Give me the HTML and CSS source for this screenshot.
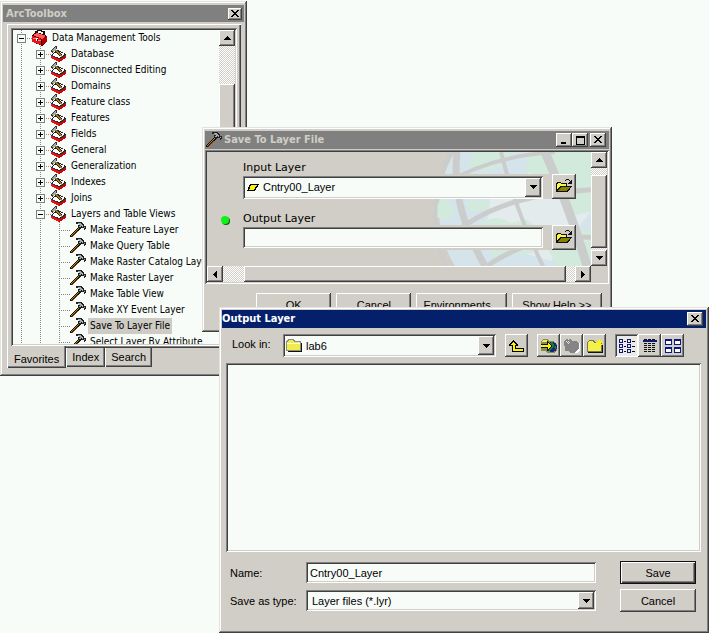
FILE: index.html
```html
<!DOCTYPE html>
<html lang="en">
<head>
<meta charset="utf-8">
<title>ArcToolbox</title>
<link rel="stylesheet" href="styles.css">
</head>
<body>
<svg class="sprite" aria-hidden="true">
  <symbol id="case" viewBox="0 0 16 16">
    <path d="M4 4V2l3-2 5 2v3" fill="none" stroke="#111" stroke-width="1.4"/>
    <path d="M0 5l5-3 10 4v6l-5 4-9-4z" fill="#400"/>
    <path d="M1 5l4-2 9 3-4 3z" fill="#ff5a58"/>
    <path d="M0 6l9 3v6l-9-3z" fill="#f01014"/>
    <path d="M10 9l5-3v6l-5 3z" fill="#b80008"/>
    <path d="M1 8l8 3" stroke="#ff9a94" fill="none"/>
    <path d="M4 8h2v3H4z" fill="#fff"/><path d="M5 9h1v2H5z" fill="#111"/>
  </symbol>
  <symbol id="tray" viewBox="0 0 16 16">
    <path d="M0 9l7-5 8 4v4l-7 4-8-4z" fill="#222"/>
    <path d="M1 9l6-4 7 3-6 4z" fill="#fff"/>
    <path d="M0 9l8 4v3l-8-4z" fill="#f01014"/>
    <path d="M8 13l7-4v3l-7 4z" fill="#d80008"/>
    <path d="M0 9l8 4 7-4" stroke="#333" fill="none"/>
    <path d="M4 4l7 6" stroke="#222" stroke-width="2.600"/>
    <path d="M4 4l7 6" stroke="#98861c" stroke-width="1.600"/>
    <path d="M0 6V4l4-4h2v3l-3 2-1 2H1z" fill="#333"/>
    <path d="M1 5l3-4h1v2L2 6z" fill="#a8a8a8"/>
  </symbol>
  <symbol id="hammer" viewBox="0 0 16 16">
    <path d="M0 13h1v-1h1v-1h1v-1h1V9h1V8h1V7h1V6h1V5h1V4h3v2h-1v1h-1v1H9v1H8v1H7v1H6v1H5v1H4v1H3v1H0z" fill="#1c1408"/>
    <path d="M1 13h1v-1h1v-1h1v-1h1V9h1V8h1V7h1V6h1V5h1v1H9v1H8v1H7v1H6v1H5v1H4v1H3v1H2v1H1z" fill="#94901c"/>
    <path d="M2 14h1v-1h1v-1h1v-1h1v-1h1V9h1v1H7v1H6v1H5v1H4v1H3v1H2z" fill="#b42c10"/>
    <path d="M6 0h6v1h1v1h1v2h2v3h-1v1h-1V6h-2V5h-1v1H9V5H8V3h1V2H6z" fill="#222"/>
    <path d="M7 1h4v1h1v1h1v2h2v1h-1V5h-2V4h-1v1H9V4h1V3h-1V2z" fill="#a8a8a8"/>
  </symbol>
  <symbol id="folder" viewBox="0 0 16 14">
    <path d="M2 13h14V4h-1v8H2z" fill="#111"/>
    <path d="M0 12V3l2-3h5l2 2h6v10z" fill="#8c8c80"/>
    <path d="M1 11V3l2-2h3l2 2h6v8z" fill="#f0ec4c"/>
    <path d="M1 4h13" stroke="#fffff0"/>
  </symbol>
  <symbol id="open" viewBox="0 0 16 14">
    <path d="M0 13V4l1-1h3l1 1h6v3h5l-4 6z" fill="#111"/>
    <path d="M1 11V5l1-1h2l1 1h5v2H4z" fill="#fcf840"/>
    <path d="M2 12l3-4h9l-3 4z" fill="#858200"/>
    <path d="M9 1h1V0h3v1h1v1h1V1h1v4h-4V4h1V3h1V2h-1V1h-3v1H9z" fill="#111"/>
  </symbol>
  <symbol id="shut" viewBox="0 0 8 8"><path d="M0 0h2v1h1v1h2V1h1V0h2v1H7v1H6v1H5v1h1v1h1v1h1v1H6V6H5V5H3v1H2v1H0V6h1V5h1V4h1V3H2V2H1V1H0z"/></symbol>
  <symbol id="down" viewBox="0 0 7 4"><path d="M0 0h7v1H6v1H5v1H4v1H3V3H2V2H1V1H0z"/></symbol>
  <symbol id="up" viewBox="0 0 7 4"><path d="M0 4h7V3H6V2H5V1H4V0H3v1H2v1H1v1H0z"/></symbol>
  <symbol id="left" viewBox="0 0 4 7"><path d="M4 0v7H3V6H2V5H1V4H0V3h1V2h1V1h1V0z"/></symbol>
  <symbol id="right" viewBox="0 0 4 7"><path d="M0 0v7h1V6h1V5h1V4h1V3H3V2H2V1H1V0z"/></symbol>
</svg>

<main class="desktop">
  <section class="window toolbox" aria-label="ArcToolbox">
    <header class="bar idle small">
      <h1>ArcToolbox</h1>
      <button class="key" aria-label="Close"><svg class="i8"><use href="#shut"/></svg></button>
    </header>
    <div class="panel">
      <div class="tree sunken">
        <ul class="rows">
          <li><span class="g"><button class="box" aria-label="Collapse"></button></span><svg class="i16"><use href="#case"/></svg><span class="label">Data Management Tools</span></li>
          <li><span class="g"></span><span class="g"><button class="box plus" aria-label="Expand"></button></span><svg class="i16"><use href="#tray"/></svg><span class="label">Database</span></li>
          <li><span class="g"></span><span class="g"><button class="box plus" aria-label="Expand"></button></span><svg class="i16"><use href="#tray"/></svg><span class="label">Disconnected Editing</span></li>
          <li><span class="g"></span><span class="g"><button class="box plus" aria-label="Expand"></button></span><svg class="i16"><use href="#tray"/></svg><span class="label">Domains</span></li>
          <li><span class="g"></span><span class="g"><button class="box plus" aria-label="Expand"></button></span><svg class="i16"><use href="#tray"/></svg><span class="label">Feature class</span></li>
          <li><span class="g"></span><span class="g"><button class="box plus" aria-label="Expand"></button></span><svg class="i16"><use href="#tray"/></svg><span class="label">Features</span></li>
          <li><span class="g"></span><span class="g"><button class="box plus" aria-label="Expand"></button></span><svg class="i16"><use href="#tray"/></svg><span class="label">Fields</span></li>
          <li><span class="g"></span><span class="g"><button class="box plus" aria-label="Expand"></button></span><svg class="i16"><use href="#tray"/></svg><span class="label">General</span></li>
          <li><span class="g"></span><span class="g"><button class="box plus" aria-label="Expand"></button></span><svg class="i16"><use href="#tray"/></svg><span class="label">Generalization</span></li>
          <li><span class="g"></span><span class="g"><button class="box plus" aria-label="Expand"></button></span><svg class="i16"><use href="#tray"/></svg><span class="label">Indexes</span></li>
          <li><span class="g"></span><span class="g"><button class="box plus" aria-label="Expand"></button></span><svg class="i16"><use href="#tray"/></svg><span class="label">Joins</span></li>
          <li><span class="g"></span><span class="g"><button class="box" aria-label="Collapse"></button></span><svg class="i16"><use href="#tray"/></svg><span class="label">Layers and Table Views</span></li>
          <li><span class="g"></span><span class="g"></span><span class="g twig"></span><svg class="i16"><use href="#hammer"/></svg><span class="label">Make Feature Layer</span></li>
          <li><span class="g"></span><span class="g"></span><span class="g twig"></span><svg class="i16"><use href="#hammer"/></svg><span class="label">Make Query Table</span></li>
          <li><span class="g"></span><span class="g"></span><span class="g twig"></span><svg class="i16"><use href="#hammer"/></svg><span class="label">Make Raster Catalog Layer</span></li>
          <li><span class="g"></span><span class="g"></span><span class="g twig"></span><svg class="i16"><use href="#hammer"/></svg><span class="label">Make Raster Layer</span></li>
          <li><span class="g"></span><span class="g"></span><span class="g twig"></span><svg class="i16"><use href="#hammer"/></svg><span class="label">Make Table View</span></li>
          <li><span class="g"></span><span class="g"></span><span class="g twig"></span><svg class="i16"><use href="#hammer"/></svg><span class="label">Make XY Event Layer</span></li>
          <li><span class="g"></span><span class="g"></span><span class="g twig"></span><svg class="i16"><use href="#hammer"/></svg><span class="label picked">Save To Layer File</span></li>
          <li><span class="g"></span><span class="g"></span><span class="g twig"></span><svg class="i16"><use href="#hammer"/></svg><span class="label">Select Layer By Attribute</span></li>
        </ul>
        <div class="scroll vertical">
          <button class="key" aria-label="Scroll up"><svg class="tri"><use href="#up"/></svg></button>
          <span class="track lead"></span>
          <span class="thumb"></span>
        </div>
      </div>
    </div>
    <nav class="tabs">
      <button class="tab on">Favorites</button><button class="tab">Index</button><button class="tab">Search</button>
    </nav>
  </section>

  <section class="window saver" aria-label="Save To Layer File">
    <header class="bar idle">
      <svg class="i16"><use href="#hammer"/></svg>
      <h2>Save To Layer File</h2>
      <span class="pair">
        <button class="key" aria-label="Minimize"><svg class="i8" viewBox="0 0 8 8"><path d="M1 6h5v2H1z"/></svg></button>
        <button class="key" aria-label="Maximize"><svg class="i9" viewBox="0 0 9 9"><path fill-rule="evenodd" d="M0 0h9v9H0zM1 2v6h7V2z"/></svg></button>
      </span>
      <button class="key" aria-label="Close"><svg class="i8"><use href="#shut"/></svg></button>
    </header>
    <div class="client sunken">
      <div class="form">
        <svg class="globe" viewBox="0 0 160 115" preserveAspectRatio="none" aria-hidden="true">
          <path d="M24 0h136v115H24Q8 90 8 58T24 0z" fill="#d5e4ea"/>
          <path d="M60 40l60-30 40 50-40 50-66-20z" fill="#e4ebec"/>
          <path d="M42 0h38l-6 12-20 8-16-4zM100 0h60v60l-20 4-16-30-30-16zM2 56l12-9 10 12-6 9-14-2zM34 50h26l-4 8-16 2zM50 74q14-14 30-2l16-4 10 8-4 26-40 4zM120 74l40 6v35h-34l-12-22z" fill="#d2eadb"/>
          <g fill="none" stroke="#cbcccc">
            <path d="M20 0Q-8 55 14 115" stroke-width="4"/>
            <path d="M26 0Q20 55 54 115" stroke-width="7"/>
            <path d="M70 0Q84 58 112 115M14 32Q60 4 124 0" stroke-width="4"/>
            <path d="M114 0Q140 60 156 115" stroke-width="9"/>
            <path d="M20 86Q62 44 160 38" stroke-width="5"/>
            <path d="M56 115Q100 84 160 86" stroke-width="5"/>
          </g>
        </svg>
        <label class="cap" for="in">Input Layer</label>
        <div class="line low">
          <span class="combo sunken">
            <svg class="poly" viewBox="0 0 12 7"><path d="M3 0h9L8 7H0z"/><path d="M4 1h6L7 6H2z" fill="#fcf400"/></svg>
            <select id="in"><option>Cntry00_Layer</option></select>
            <span class="key drop"><svg class="tri"><use href="#down"/></svg></span>
          </span>
          <button class="key browse" aria-label="Browse for input layer"><svg class="fold"><use href="#open"/></svg></button>
        </div>
        <i class="dot"></i>
        <label class="cap" for="out">Output Layer</label>
        <div class="line">
          <input class="field sunken" id="out" type="text">
          <button class="key browse" aria-label="Browse for output layer"><svg class="fold"><use href="#open"/></svg></button>
        </div>
      </div>
      <div class="scroll vertical">
        <button class="key" aria-label="Scroll up"><svg class="tri"><use href="#up"/></svg></button>
        <span class="track gap8"></span><span class="thumb"></span><span class="track gap2"></span>
        <button class="key" aria-label="Scroll down"><svg class="tri"><use href="#down"/></svg></button>
      </div>
      <div class="scroll level">
        <button class="key" aria-label="Scroll left"><svg class="side"><use href="#left"/></svg></button>
        <span class="track gap21"></span><span class="thumb"></span><span class="track gap8"></span>
        <button class="key" aria-label="Scroll right"><svg class="side"><use href="#right"/></svg></button>
      </div>
    </div>
    <footer class="actions">
      <button class="key">OK</button><button class="key">Cancel</button><button class="key wide">Environments...</button><button class="key wide">Show Help &gt;&gt;</button>
    </footer>
  </section>

  <section class="window output" aria-label="Output Layer">
    <header class="bar active">
      <h2>Output Layer</h2>
      <button class="key" aria-label="Close"><svg class="i8"><use href="#shut"/></svg></button>
    </header>
    <div class="look">
      <label for="look">Look in:</label>
      <span class="combo sunken">
        <svg class="fold"><use href="#folder"/></svg>
        <select id="look"><option>lab6</option></select>
        <span class="key drop"><svg class="tri"><use href="#down"/></svg></span>
      </span>
      <span class="tools">
        <button class="key" aria-label="Up one level"><svg viewBox="0 0 16 14"><path d="M4 1h1v1h1v1h1v1h1v1h1v2H7v2h8v4H3V7H0V5h1V4h1V3h1V2h1z"/><path d="M4 3h1v1h1v1h1v1H6v4h8v2H4V6H2V5h1V4h1z" fill="#fcf400"/></svg></button>
      </span>
      <span class="tools">
        <button class="key" aria-label="Connect to folder"><svg viewBox="0 0 16 14"><path d="M0 2l2-2h4l2 2h4l4 3v6l-3 3H7l-3-2H0z" fill="#8c8c50"/><path d="M1 2l2-1h3l1 2H1z" fill="#f0ec4c"/><circle cx="11" cy="8" r="5" fill="#182878"/><path d="M8 4l4-1 1 4-2 3-3 2zM13 9l2-3v4z" fill="#188030"/><path d="M0 5h6V2l6 5-6 5V9H0z" fill="#111"/><path d="M0 6h7V4l3 3-3 3V8H0z" fill="#fcf400"/></svg></button>
        <button class="key" aria-label="Disconnect from folder"><svg viewBox="0 0 16 14"><path d="M0 2l2-2h4l2 2h4l3 3v6l-3 3H7l-3-2H1z" fill="#858585"/><path d="M15 4h1v7l-3 3h-3l5-4z" fill="#fff"/><path d="M2 2h1v1H2zM4 2h1v1H4zM3 3h1v1H3zM5 3h1v1H5zM4 4h1v1H4zM4 0h1v1H4z" fill="#ddd"/></svg></button>
        <button class="key" aria-label="New folder"><svg viewBox="0 0 16 14"><path d="M0 13V4l2-3h4l2 2h7v10z" fill="#77774c"/><path d="M1 12V4l1-2h3l2 2h7v8z" fill="#f4f04c"/><path d="M12 0v7M9 3h7M10 1l5 5M15 1l-5 5" stroke="#fff500" fill="none"/><path d="M1 13h14V6" stroke="#111" fill="none"/></svg></button>
      </span>
      <span class="tools">
        <button class="key pressed" aria-label="List"><svg viewBox="0 0 16 14"><path fill="#0c1880" fill-rule="evenodd" d="M0 0h4v4H0zM1 1v2h2V1zM0 5h4v4H0zM1 6v2h2V6zM0 10h4v4H0zM1 11v2h2v-2zM8 0h4v4H8zM9 1v2h2V1zM8 5h4v4H8zM9 6v2h2V6zM8 10h4v4H8zM9 11v2h2v-2z"/><path fill="#111" d="M5 2h2v1H5zM5 7h2v1H5zM5 12h2v1H5zM13 2h3v1h-3zM13 7h3v1h-3zM13 12h3v1h-3z"/></svg></button>
        <button class="key" aria-label="Details"><svg viewBox="0 0 16 14"><path d="M2 .500h12M2 4.500h12M2 6.500h12M2 8.500h12M2 10.500h12M2 12.500h12" stroke="#111" stroke-dasharray="3 1"/><path d="M1 2h14" stroke="#0c1880" stroke-width="2"/></svg></button>
        <button class="key" aria-label="Thumbnails"><svg viewBox="0 0 16 14"><path fill="#fff" d="M1 1h6v5H1zM9 1h6v5H9zM1 8h6v5H1zM9 8h6v5H9z"/><path fill="#0c1880" fill-rule="evenodd" d="M0 0h7v6H0zM1 2v3h5V2zM9 0h7v6H9zM10 2v3h5V2zM0 8h7v6H0zM1 10v3h5v-3zM9 8h7v6H9zM10 10v3h5v-3z"/></svg></button>
      </span>
    </div>
    <div class="files sunken"></div>
    <div class="save">
      <label for="name">Name:</label>
      <input class="field sunken" id="name" type="text" value="Cntry00_Layer">
      <button class="key main">Save</button>
      <label for="type">Save as type:</label>
      <span class="combo sunken">
        <select id="type"><option>Layer files (*.lyr)</option></select>
        <span class="key drop"><svg class="tri"><use href="#down"/></svg></span>
      </span>
      <button class="key">Cancel</button>
    </div>
  </section>
</main>
</body>
</html>
```
FILE: styles.css
```css
:root {
  --face: #d0cec6;
  --paper: #f7fcf8;
  --mid: #808080;
  --dark: #404040;
  --ui: "Liberation Sans", Arial, sans-serif;
  --tree: "DejaVu Sans Condensed", "DejaVu Sans", sans-serif;
}
* { box-sizing: border-box; }
body { margin: 0; background: var(--paper); color: #000; font: 11px/16px var(--ui); }
button, input, select { font: inherit; color: inherit; margin: 0; padding: 0; border: 0; background: none; border-radius: 0; outline: 0; }
svg { display: block; flex: none; shape-rendering: crispEdges; }
.sprite { position: absolute; width: 0; height: 0; }
.i8 { width: 8px; height: 8px; }
.i9 { width: 9px; height: 9px; }
.i16 { width: 16px; height: 16px; }
.tri { width: 7px; height: 4px; }
.side { width: 4px; height: 7px; }
.fold { width: 16px; height: 14px; }

.desktop { position: relative; min-height: 100vh; overflow: hidden; }
.window {
  position: absolute;
  display: flex;
  flex-direction: column;
  padding: 3px;
  background: var(--face);
  box-shadow: inset -1px -1px var(--dark), inset 1px 1px #e4e2dc, inset -2px -2px var(--mid), inset 2px 2px #fff;
}
.toolbox { left: 0; top: 1px; width: 247px; height: 375px; }
.saver { left: 202px; top: 127px; width: 410px; height: 205px; padding: 4px 3px; }
.output { left: 219px; top: 307px; width: 490px; height: 326px; }

.bar { display: flex; align-items: center; gap: 2px; height: 18px; padding: 0 3px 0 1px; flex: none; }
.bar h1, .bar h2 { flex: 1; margin: 0; font: bold 11px/16px var(--tree); }
.idle { background: var(--mid); color: #d0cec6; }
.active { background: #05206a; color: #fff; padding-left: 0; }
.bar .key { width: 16px; height: 14px; }
.bar.small { height: 17px; margin-top: 1px; padding: 0 2px 0 3px; }
.small .key { width: 14px; height: 12px; }
.pair { display: flex; }

.key {
  display: flex;
  align-items: center;
  justify-content: center;
  background: var(--face);
  box-shadow: inset -1px -1px var(--dark), inset 1px 1px #fff, inset -2px -2px var(--mid);
}
.sunken {
  padding: 2px;
  background: var(--paper);
  box-shadow: inset 1px 1px var(--mid), inset -1px -1px #fff, inset 2px 2px var(--dark), inset -2px -2px var(--face);
}

.panel {
  flex: 1;
  min-height: 0;
  margin: 2px 3px 0 4px;
  padding: 4px;
  padding-bottom: 2px;
  box-shadow: inset 1px 1px #fff, inset -1px -1px var(--dark), inset -2px -2px var(--mid);
  display: flex;
}
.tree { flex: 1; display: flex; min-width: 0; }
.rows { flex: 1; min-width: 0; margin: 0; padding: 0; list-style: none; overflow: hidden; font: 10px/16px var(--tree); }
.rows li { display: flex; height: 16px; white-space: nowrap; }
.g {
  flex: none;
  width: 19px;
  padding: 4px 0 0 4px;
  background: repeating-linear-gradient(#888 0 1px, transparent 1px 2px) 8px 0 / 1px 16px no-repeat;
}
.g:has(.box), .twig {
  background:
    repeating-linear-gradient(#888 0 1px, transparent 1px 2px) 8px 0 / 1px 16px no-repeat,
    repeating-linear-gradient(90deg, #888 0 1px, transparent 1px 2px) 8px 8px / 11px 1px no-repeat;
}
.box {
  display: block;
  width: 9px;
  height: 9px;
  border: 1px solid var(--mid);
  background: linear-gradient(#000, #000) center / 5px 1px no-repeat var(--paper);
}
.plus {
  background:
    linear-gradient(#000, #000) center / 5px 1px no-repeat,
    linear-gradient(#000, #000) center / 1px 5px no-repeat var(--paper);
}
.label { margin-left: 2px; padding: 0 2px; }
.picked { background: #cdcbc4; }

.scroll { display: flex; flex: none; }
.scroll .key { width: 16px; height: 16px; flex: none; }
.vertical { flex-direction: column; width: 16px; }
.track { background: repeating-conic-gradient(#fff 0 25%, var(--face) 0 50%) 0 0 / 2px 2px; }
.thumb { flex: 1; background: var(--face); box-shadow: inset -1px -1px var(--dark), inset 1px 1px #fff, inset -2px -2px var(--mid); }
.lead { height: 38px; }
.vertical .gap8 { height: 7px; }
.vertical .gap2 { height: 2px; }
.level .gap21 { width: 21px; }
.level .gap8 { width: 9px; }

.tabs { display: flex; height: 25px; flex: none; padding-left: 4px; align-items: flex-start; }
.tab {
  height: 19px;
  padding: 0 6px;
  background: var(--face);
  box-shadow: inset 1px 0 #fff, inset -1px -1px var(--dark), inset -2px -2px var(--mid);
  line-height: 17px;
}
.on { height: 22px; margin-top: -2px; padding: 4px 7px 0; }

.client { display: grid; grid-template: 1fr 16px / 1fr 16px; height: 134px; margin: 1px 0 0; background: var(--face); }
.form {
  display: grid;
  grid-template-columns: 36px 1fr;
  grid-template-rows: 21px 26px 25px 26px;
  position: relative;
  padding-right: 15px;
  align-items: center;
}
.globe { position: absolute; right: 0; top: 0; width: 160px; height: 100%; shape-rendering: auto; }
.cap, .line, .dot { position: relative; }
.cap { grid-column: 2; align-self: end; font: 11px/10px "DejaVu Sans", sans-serif; }
.line { grid-column: 2; display: flex; align-items: center; gap: 9px; min-width: 0; background: var(--face); }
.low { align-items: end; }
.browse { width: 24px; height: 25px; flex: none; }
.dot { width: 8px; height: 8px; border-radius: 50%; background: #0cf414; box-shadow: 1px 1px #145c14; justify-self: center; align-self: end; }
.dot + .cap { grid-row: 3; }
.combo { flex: 1; display: flex; align-items: center; height: 23px; min-width: 0; }
.combo select { flex: 1; min-width: 0; height: 16px; appearance: none; padding-left: 4px; }
.drop { width: 16px; align-self: stretch; pointer-events: none; }
.poly { width: 12px; height: 7px; margin-left: 2px; }
.field { min-width: 0; width: 100%; height: 21px; padding: 2px 4px; }
.line .field { flex: 1; }
.actions { display: flex; gap: 5px; padding: 9px 7px 0 51px; }
.actions .key { flex: 75; height: 23px; }
.actions .wide { flex: 90; }

.look { display: flex; align-items: center; gap: 9px; padding: 4px 22px 4px 10px; height: 35px; }
.look label { width: 42px; white-space: nowrap; padding-bottom: 4px; }
.look .combo .fold { margin-left: 1px; }
.tools { display: flex; }
.tools .key { width: 23px; height: 23px; }
.tools svg { width: 16px; height: 14px; }
.tools .pressed { background: #eceae6; box-shadow: inset 1px 1px var(--mid), inset -1px -1px #fff, inset 2px 2px var(--dark); }
.files { flex: 1; margin: 0 5px 0 4px; }
.save {
  display: grid;
  grid-template-columns: 76px 1fr 76px;
  grid-template-rows: 23px 23px;
  gap: 5px 0;
  align-items: center;
  padding: 9px 10px 18px 8px;
}
.save > .key { height: 23px; }
.save > .field, .save > .combo { width: auto; margin-right: 24px; height: 21px; }
.save .main { box-shadow: inset 0 0 0 1px #111, inset 2px 2px #fff, inset -2px -2px var(--dark), inset -3px -3px var(--mid); }
```
